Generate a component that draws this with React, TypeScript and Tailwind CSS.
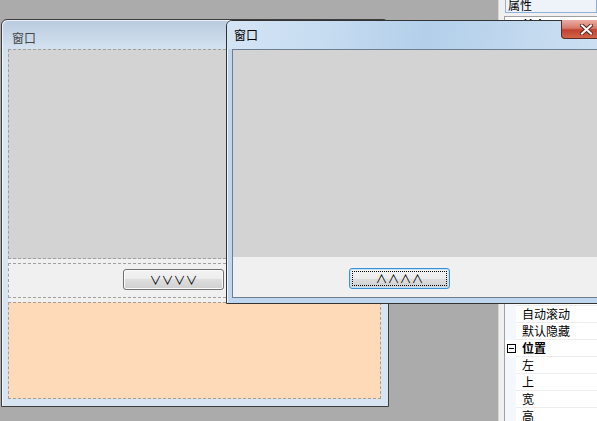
import React from 'react';

// ── Property grid rows (hidden ones sit behind the front window) ────────────
const BASIC_ROWS = [
  '名称', '标题', '可视', '禁止', '可停靠', '边框', '背景颜色', '字体',
  '前景颜色', '光标', '鼠标指针', '提示文本', '透明度', '布局', '停靠', '锚点',
  '自动滚动', '默认隐藏',
];
const POS_ROWS = ['左', '上', '宽', '高'];

function CollapseBox() {
  return (
    <span className="relative mt-[4px] ml-[2px] block h-[9px] w-[9px] border border-black bg-white">
      <span className="absolute left-[1px] top-[3px] h-px w-[5px] bg-black" />
    </span>
  );
}

function CategoryRow({ label }: { label: string }) {
  return (
    <div className="flex h-[17px]">
      <div className="w-[11px] shrink-0">
        <CollapseBox />
      </div>
      <div className="flex-1 border-b border-[#ededed] pl-[6px] text-[12px] font-bold leading-[16px] text-black">
        {label}
      </div>
    </div>
  );
}

function PropRow({ label }: { label: string }) {
  return (
    <div className="flex h-[17px]">
      <div className="w-[11px] shrink-0 bg-[#f4f7fc]" />
      <div className="flex-1 border-b border-[#ededed] pl-[6px] text-[12px] leading-[16px] whitespace-nowrap text-black">
        {label}
      </div>
    </div>
  );
}

function WinButton({ label, focused }: { label: string; focused?: boolean }) {
  return (
    <div
      className={
        focused
          ? 'relative flex h-[21px] w-[101px] items-center justify-center rounded-[3px] border border-[#3c8fd0] bg-[linear-gradient(to_bottom,#f3f3f3_0%,#ececec_50%,#dedede_50%,#d0d0d0_100%)] shadow-[inset_0_0_0_1px_#bfe3f9]'
          : 'relative flex h-[21px] w-[101px] items-center justify-center rounded-[3px] border border-[#707070] bg-[linear-gradient(to_bottom,#f3f3f3_0%,#ececec_50%,#dedede_50%,#d0d0d0_100%)] shadow-[inset_0_0_0_1px_#fbfbfb]'
      }
    >
      {focused && <span className="absolute inset-[2px] border border-dotted border-black" />}
      <span className="text-[12px] leading-[14px] text-black">{label}</span>
    </div>
  );
}

export default function App() {
  return (
    <div className="relative h-[421px] w-[597px] overflow-hidden bg-[#ababab] font-['Noto_Sans_CJK_SC','Liberation_Sans',sans-serif]">
      {/* ── Property panel ───────────────────────────────────────────── */}
      <div className="absolute left-[498px] top-0 h-full w-[99px] border-l border-[#d6d6d6] bg-[#f0f0f0] pl-[5px]">
        <div className="ml-[1px] mt-[-3px] h-[16px] border border-[#8fb0d8] bg-[#eef3fa] pl-[2px] text-[12px] leading-[14px] text-black">
          属性
        </div>
        <div className="mt-[3px] border-l border-t border-[#a0a0a0] bg-white">
          <CategoryRow label="基本" />
          {BASIC_ROWS.map((r) => (
            <PropRow key={r} label={r} />
          ))}
          <CategoryRow label="位置" />
          {POS_ROWS.map((r) => (
            <PropRow key={r} label={r} />
          ))}
        </div>
      </div>

      {/* ── Back window (inactive) ───────────────────────────────────── */}
      <div className="absolute left-[1px] top-[19px] flex h-[388px] w-[388px] flex-col rounded-t-[6px] border border-[#3d3d3d] bg-[linear-gradient(to_bottom,#b9cbdf_0px,#d3e1ef_28px,#d9e5f2_60px,#d7e4f2_100%)] pb-[7px] pl-[6px] pr-[7px] shadow-[inset_1px_1px_0_rgba(255,255,255,0.7)]">
        <div className="h-[29px] shrink-0 pl-[4px] pt-[10px] text-[12px] leading-[16px] text-[#474747]">
          窗口
        </div>
        <div className="flex flex-1 flex-col gap-[4px] bg-[#f0f0f0]">
          <div className="h-[210px] border border-dashed border-[#a0a0a0] bg-[#d3d3d3]" />
          <div className="flex h-[35px] border border-dashed border-[#a0a0a0] pl-[114px] pt-[5px]">
            <WinButton label="∨∨∨∨" />
          </div>
          <div className="flex-1 border border-dashed border-[#a0a0a0] bg-[#ffdab9]" />
        </div>
      </div>

      {/* ── Front window (active) ────────────────────────────────────── */}
      <div className="absolute left-[226px] top-[20px] flex h-[284px] w-[400px] flex-col rounded-t-[6px] border border-[#333333] bg-[#bed7ef] px-[5px] pb-[5px] shadow-[inset_1px_1px_0_rgba(255,255,255,0.8)]">
        <div className="-mx-[5px] h-[28px] shrink-0 rounded-t-[5px] bg-[linear-gradient(100deg,#d4e5f5_0%,#c6dcf1_25%,#b3cfea_50%,#c2d9ef_75%,#d0e2f4_100%)] pl-[7px] pt-[6px] text-[12px] leading-[16px] text-black">
          窗口
        </div>
        <div className="flex flex-1 flex-col border border-[#6d7e90] bg-[#f0f0f0]">
          <div className="h-[207px] bg-[#d3d3d3]" />
          <div className="pl-[116px] pt-[11px]">
            <WinButton label="∧∧∧∧" focused />
          </div>
        </div>

        {/* close button */}
        <div className="absolute left-[334px] top-[-1px] h-[19px] w-[50px] rounded-bl-[4px] border border-t-0 border-[#5e2a26] bg-[linear-gradient(to_bottom,#eaaea3_0%,#d77a6b_45%,#c3412f_55%,#d06447_100%)]">
          <svg className="absolute left-[18px] top-[4px]" width="13" height="11" viewBox="0 0 13 11">
            <path d="M2 1.5 L11 9.5 M11 1.5 L2 9.5" stroke="#5a2a25" strokeWidth="4" strokeLinecap="square" />
            <path d="M2 1.5 L11 9.5 M11 1.5 L2 9.5" stroke="#ffffff" strokeWidth="2" strokeLinecap="square" />
          </svg>
        </div>
      </div>
    </div>
  );
}
